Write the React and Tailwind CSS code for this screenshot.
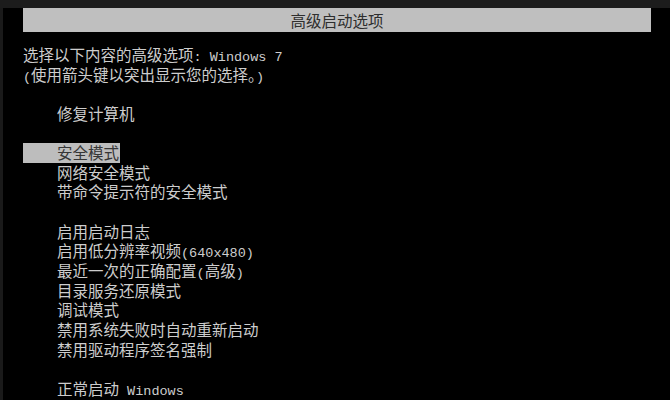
const cjk = { fontFamily: '"Noto Sans CJK SC", "Noto Sans CJK JP", sans-serif' };

const Latin = ({ children }) => (
  <span className="font-['Liberation_Mono',monospace] text-[13.5px]">{children}</span>
);

const Line = ({ children, indent = true }) => (
  <div className={`h-[19.65px] leading-[19.65px] whitespace-nowrap ${indent ? "pl-[34px]" : ""}`}>
    {children}
  </div>
);

const Blank = () => <div className="h-[19.65px]" />;

export default function App() {
  return (
    <div
      className="w-[670px] h-[400px] bg-black text-[#cdcdcd] text-[15.5px] overflow-hidden flex flex-col"
      style={cjk}
    >
      {/* top strip */}
      <div className="h-2 bg-[#1c1c1c] shrink-0" />
      <div className="flex-1 flex border-l-[3px] border-[#1a1a1a]">
        <div className="pl-[20px] flex flex-col">
          {/* title bar */}
          <div className="w-[628px] h-6 bg-[#bfbfbf] text-[#2e2e2e] text-center leading-6 text-[15.5px]">
            高级启动选项
          </div>
          <div className="h-[13px]" />
          <Line indent={false}>
            选择以下内容的高级选项<Latin>: Windows 7</Latin>
          </Line>
          <Line indent={false}>
            <Latin>(</Latin>使用箭头键以突出显示您的选择。<Latin>)</Latin>
          </Line>
          <Blank />
          <Line>修复计算机</Line>
          <Blank />
          <div className="h-[19.65px] leading-[19.65px]">
            <span className="inline-block pl-[34px] pr-[1px] bg-[#bdbdbd] text-[#363636]">安全模式</span>
          </div>
          <Line>网络安全模式</Line>
          <Line>带命令提示符的安全模式</Line>
          <Blank />
          <Line>启用启动日志</Line>
          <Line>
            启用低分辨率视频<Latin>(640x480)</Latin>
          </Line>
          <Line>
            最近一次的正确配置<Latin>(</Latin>高级<Latin>)</Latin>
          </Line>
          <Line>目录服务还原模式</Line>
          <Line>调试模式</Line>
          <Line>禁用系统失败时自动重新启动</Line>
          <Line>禁用驱动程序签名强制</Line>
          <Blank />
          <Line>
            正常启动<Latin> Windows</Latin>
          </Line>
        </div>
      </div>
    </div>
  );
}
